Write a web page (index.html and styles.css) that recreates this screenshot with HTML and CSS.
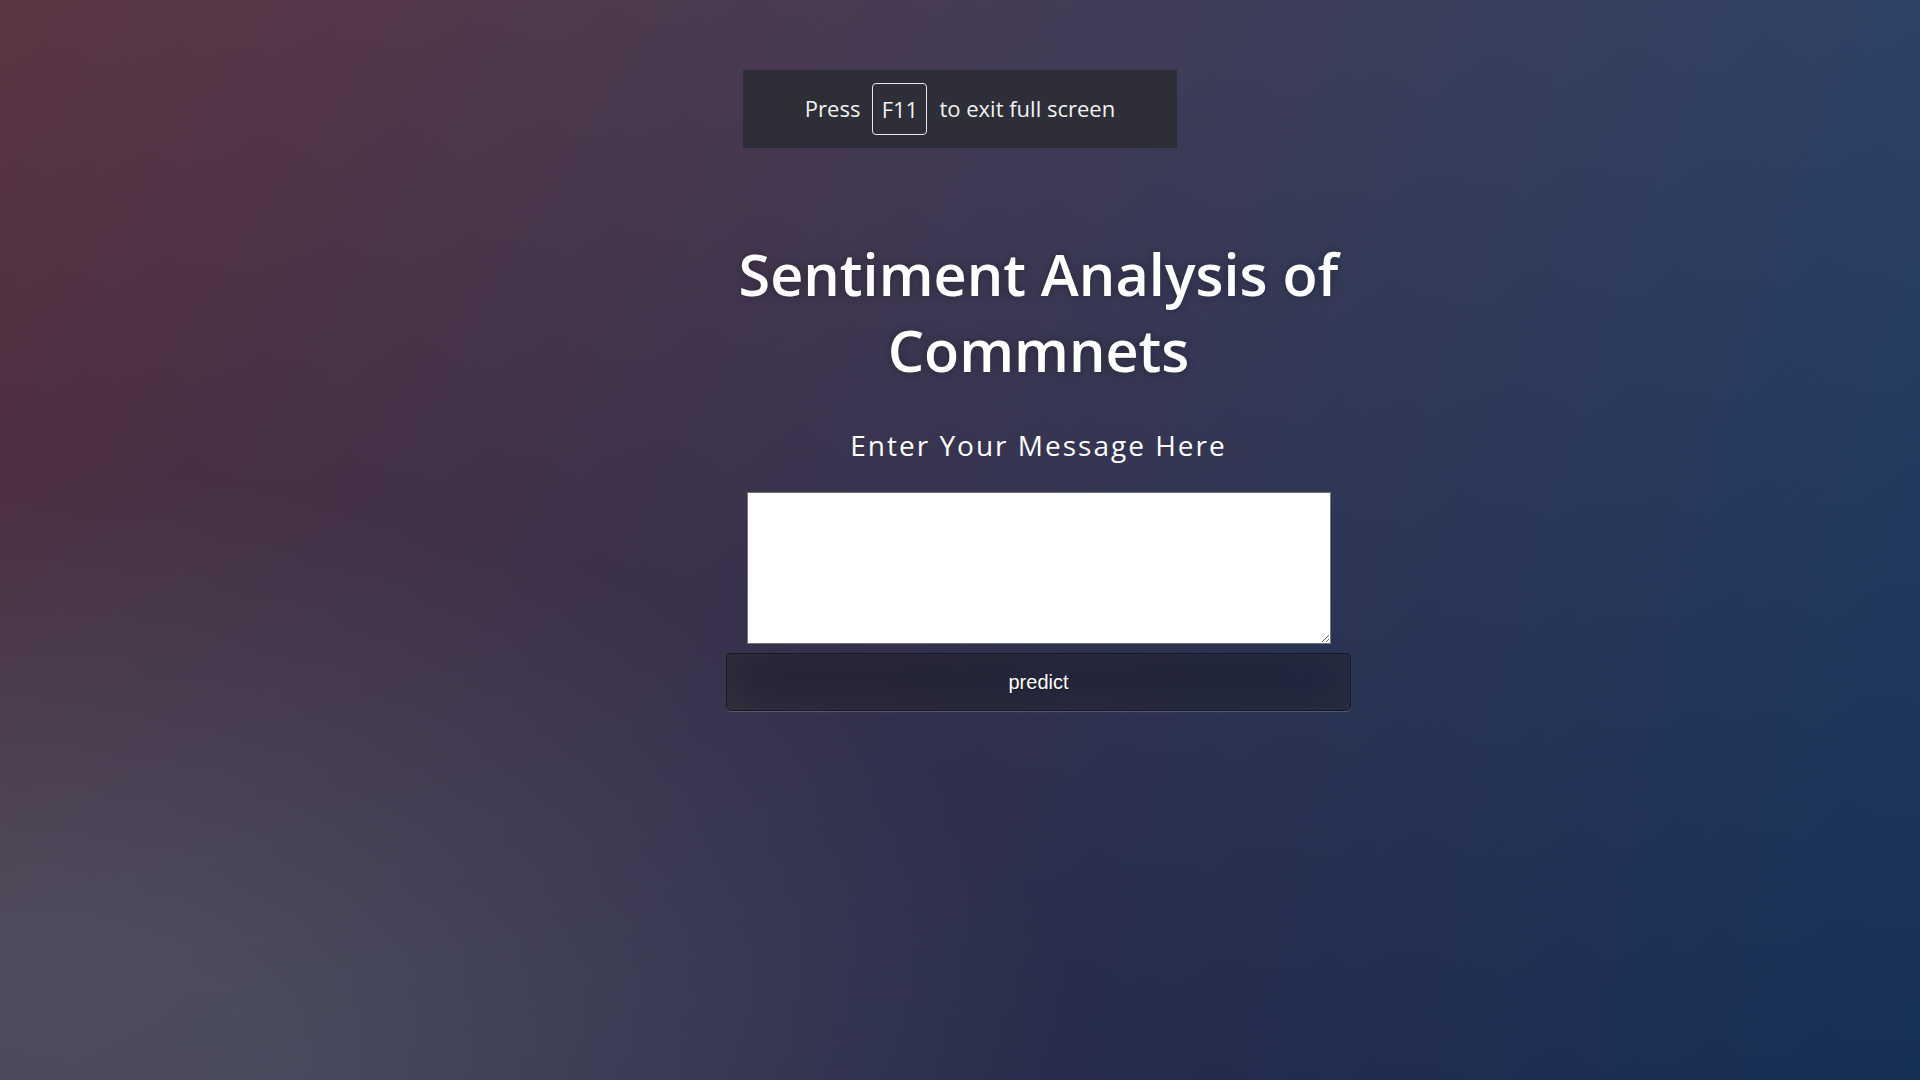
FILE: index.html
```html
<!DOCTYPE html>
<html lang="en">
<head>
<meta charset="utf-8">
<title>Sentiment Analysis of Commnets</title>
<link rel="stylesheet" href="styles.css">
</head>
<body>
<div class="fs-toast">
  <span class="fs-word">Press</span>
  <span class="fs-key">F11</span>
  <span class="fs-word">to exit full screen</span>
</div>
<main class="login">
  <h1 class="title">Sentiment Analysis of Commnets</h1>
  <h2 class="subtitle">Enter Your Message Here</h2>
  <form class="form">
    <textarea class="message" name="message"></textarea>
    <button class="btn" type="button">predict</button>
  </form>
</main>
</body>
</html>
```
FILE: styles.css
```css
html {
  height: 100%;
  background: #092756;
  background:
    radial-gradient(ellipse farthest-corner at 0% 100%, rgba(104,128,138,.4) 10%, rgba(138,114,76,0) 40%),
    linear-gradient(to bottom, rgba(57,173,219,.25) 0%, rgba(42,60,87,.4) 100%),
    linear-gradient(135deg, #670d10 0%, #092756 100%);
}
body {
  margin: 0;
  min-height: 100%;
  font-family: "Open Sans", sans-serif;
  color: #fff;
}
.fs-toast {
  position: fixed;
  top: 70px;
  left: 50%;
  transform: translateX(-50%);
  width: 434px;
  height: 78px;
  box-sizing: border-box;
  padding-bottom: 2px;
  background: #2d2e38;
  display: flex;
  align-items: center;
  justify-content: center;
  gap: 12px;
  font-family: "Open Sans", sans-serif;
  font-size: 22px;
  color: #f2f2f2;
}
.fs-key {
  display: flex;
  align-items: center;
  justify-content: center;
  width: 55px;
  height: 52px;
  box-sizing: border-box;
  margin-top: 2px;
  border: 1.5px solid #e8e8e8;
  border-radius: 4px;
}
.login {
  width: 625px;
  margin-left: calc(50% - 234px);
  padding-top: 236px;
  display: flex;
  flex-direction: column;
  align-items: center;
}
.title {
  margin: 0;
  width: 625px;
  font-size: 57.5px;
  font-weight: 600;
  line-height: 76px;
  text-align: center;
  letter-spacing: 0;
  text-shadow: 0 0 10px rgba(0,0,0,.3);
}
.subtitle {
  margin: 38px 0 0;
  font-size: 28px;
  font-weight: 400;
  line-height: 38px;
  letter-spacing: 2px;
  text-align: center;
}
.form {
  margin-top: 28px;
  width: 625px;
  display: flex;
  flex-direction: column;
  align-items: center;
  gap: 9px;
}
.message {
  display: block;
  width: 584px;
  height: 152px;
  box-sizing: border-box;
  margin: 0;
  border: 1px solid #767676;
  background: #fff;
  resize: vertical;
}
.btn {
  width: 625px;
  height: 58px;
  box-sizing: border-box;
  background: rgba(0,0,0,.3);
  border: 1px solid rgba(0,0,0,.3);
  border-radius: 5px;
  box-shadow: inset 0 -5px 45px rgba(100,100,100,.2), 0 1px 1px rgba(255,255,255,.2);
  color: #fff;
  font-family: "Liberation Sans", Arial, sans-serif;
  font-size: 20px;
  text-shadow: 1px 1px 1px rgba(0,0,0,.3);
  cursor: pointer;
}
```
